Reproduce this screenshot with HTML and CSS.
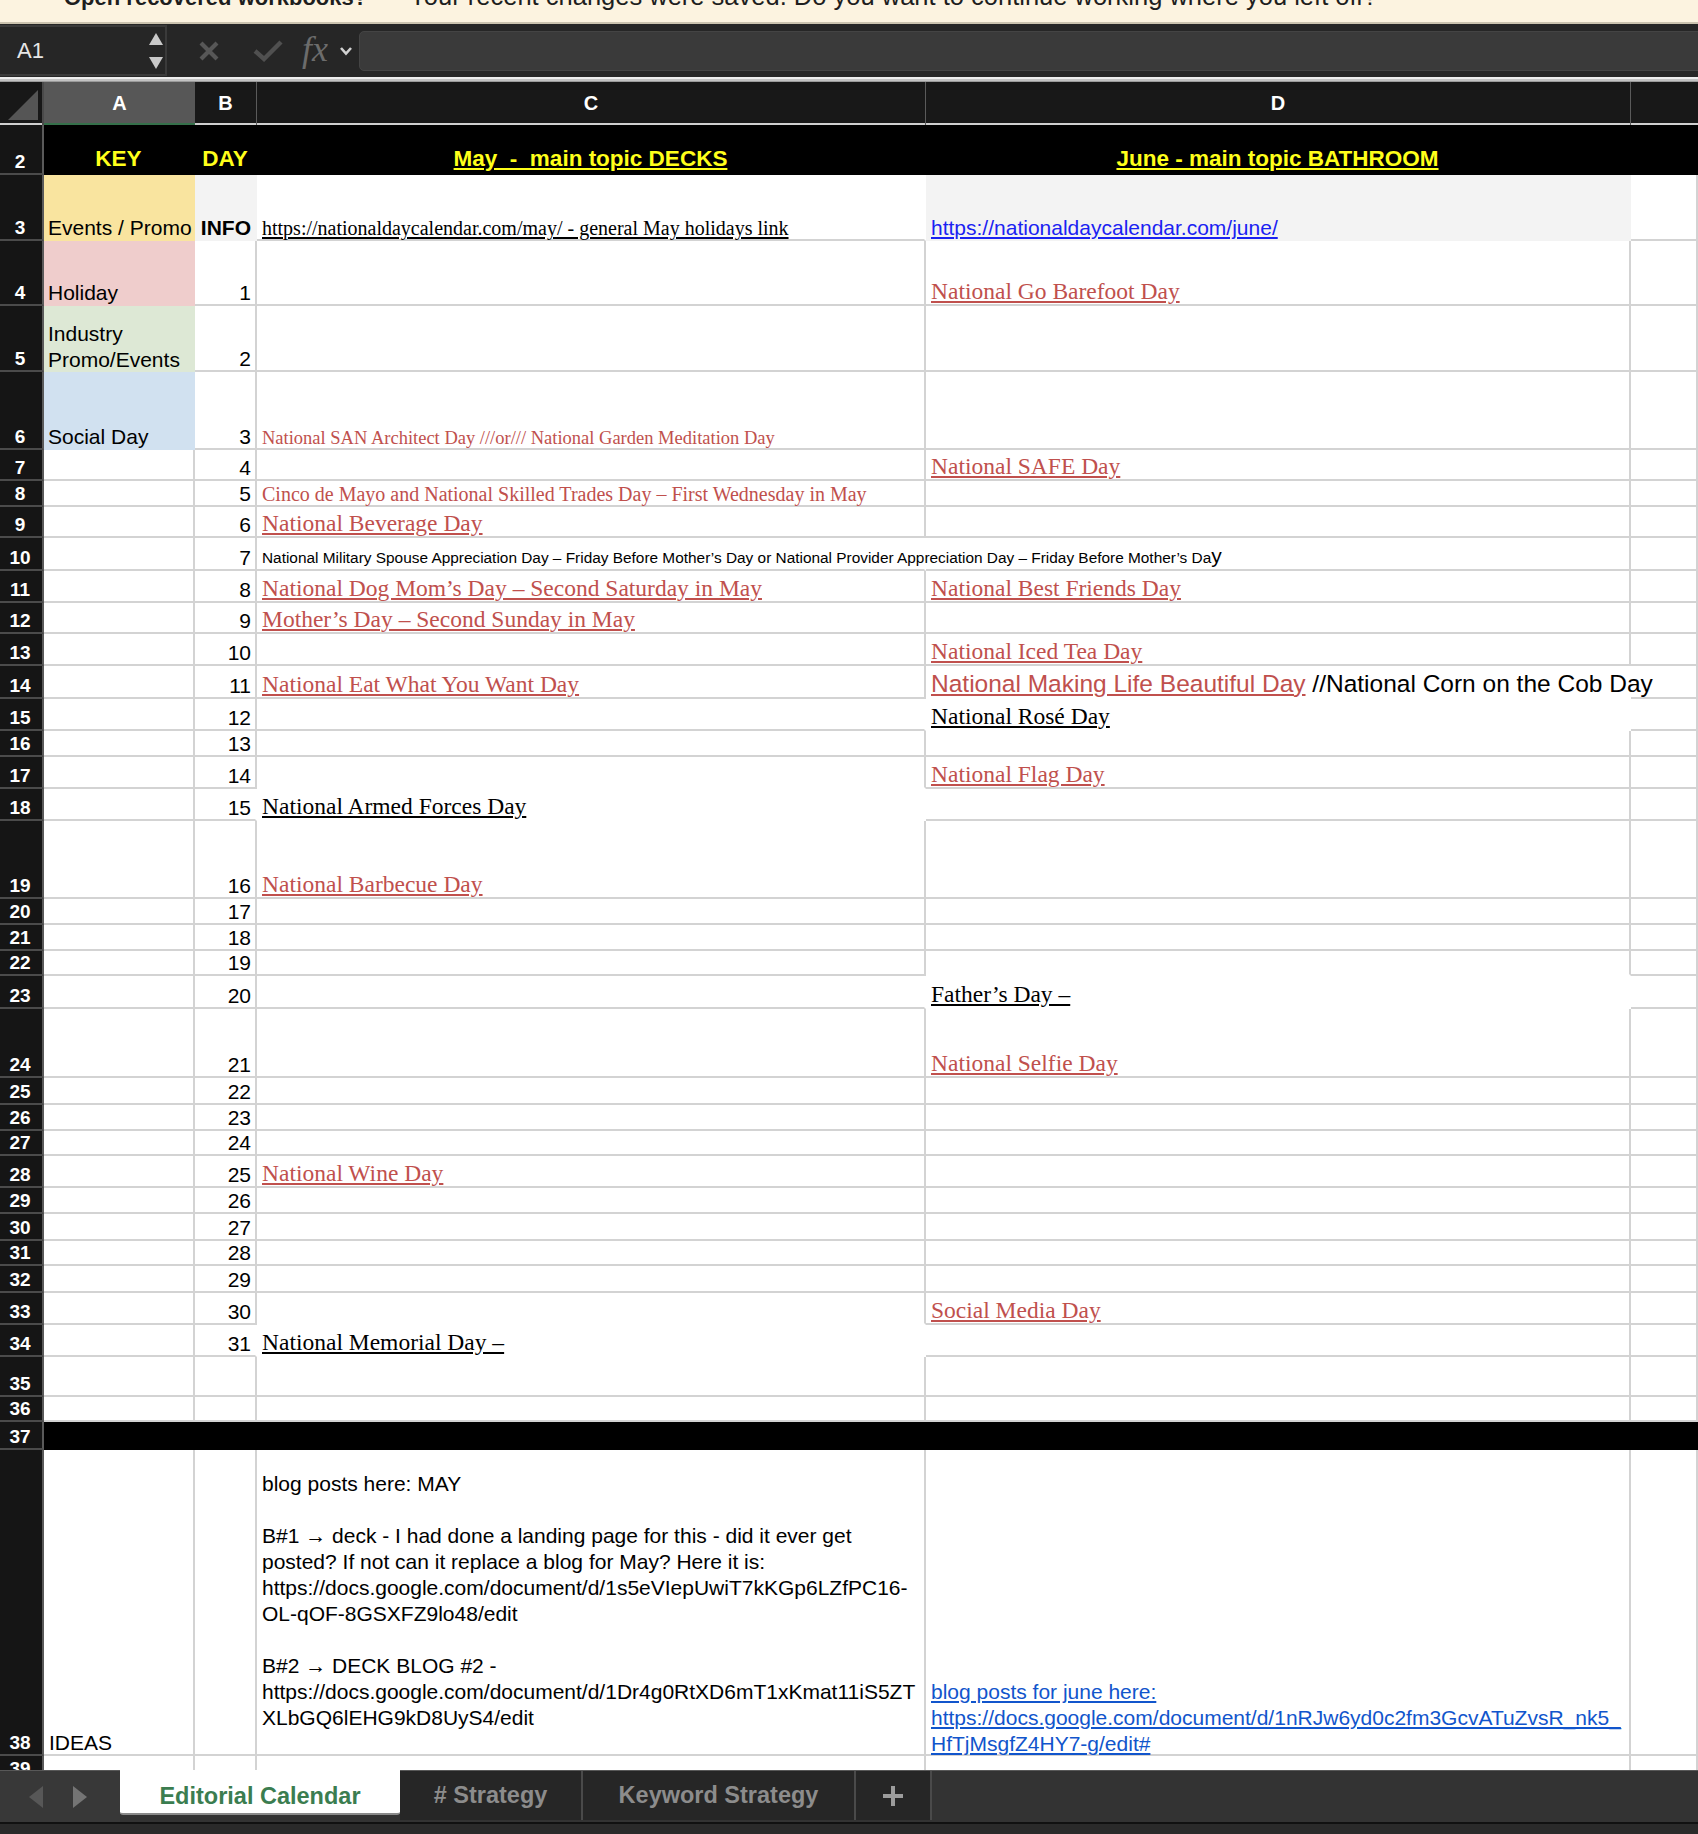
FILE: index.html
```html
<!DOCTYPE html>
<html>
<head>
<meta charset="utf-8">
<link rel="stylesheet" href="styles.css">
</head>
<body>
<div class="banner"><div class="banner-text"><span class="bt-title">Open recovered workbooks?</span><span class="bt-msg">Your recent changes were saved. Do you want to continue working where you left off?</span></div></div>

<div class="fbar">
  <div class="namebox">
    <span class="nb-text">A1</span>
    <span class="spin">
      <svg width="14" height="12" viewBox="0 0 14 12"><polygon points="7,0 14,12 0,12" fill="#c9c9c9"/></svg>
      <svg width="14" height="12" viewBox="0 0 14 12"><polygon points="0,0 14,0 7,12" fill="#c9c9c9"/></svg>
    </span>
  </div>
  <div class="ftools">
    <svg class="ic-x" width="22" height="22" viewBox="0 0 22 22"><path d="M3 3 L19 19 M19 3 L3 19" stroke="#575757" stroke-width="4.2" stroke-linecap="butt"/></svg>
    <svg class="ic-ok" width="30" height="22" viewBox="0 0 30 22"><path d="M2 11 L11 19 L28 2" stroke="#505050" stroke-width="4.4" fill="none"/></svg>
    <span class="fx">fx</span>
    <svg class="ic-chev" width="14" height="10" viewBox="0 0 14 10"><path d="M2 2 L7 7.5 L12 2" stroke="#d2d2d2" stroke-width="2.6" fill="none"/></svg>
  </div>
  <div class="finput"></div>
</div>
<div class="sep"></div>

<div class="sheet">
  <div class="row hdr">
    <div class="corner"><svg width="42" height="41" viewBox="0 0 42 41"><polygon points="38,8 38,38 8,38" fill="#555"/></svg></div>
    <div class="ch sel">A</div>
    <div class="ch">B</div>
    <div class="ch">C</div>
    <div class="ch">D</div>
    <div class="ch last"></div>
  </div>

  <div class="row h50">
    <div class="rh">2</div>
    <div class="c fk ctr"><span class="yh">KEY</span></div>
    <div class="c fk ctr"><span class="yh">DAY</span></div>
    <div class="c fk ctr"><span class="yh u">May  -  main topic DECKS</span></div>
    <div class="c fk ctr"><span class="yh u">June - main topic BATHROOM</span></div>
    <div class="c fk"></div>
  </div>

  <div class="row h66">
    <div class="rh">3</div>
    <div class="c fy">Events / Promo</div>
    <div class="c fg n"><b>INFO</b></div>
    <div class="c nr"><span class="lk3">https://nationaldaycalendar.com/may/ - general May holidays link</span></div>
    <div class="c fg"><span class="bl3">https://nationaldaycalendar.com/june/</span></div>
    <div class="c"></div>
  </div>

  <div class="row h65">
    <div class="rh">4</div>
    <div class="c fp">Holiday</div>
    <div class="c n">1</div>
    <div class="c"></div>
    <div class="c"><span class="rl">National Go Barefoot Day</span></div>
    <div class="c"></div>
  </div>

  <div class="row h66">
    <div class="rh">5</div>
    <div class="c fgr"><div class="two">Industry<br>Promo/Events</div></div>
    <div class="c n">2</div>
    <div class="c"></div>
    <div class="c"></div>
    <div class="c"></div>
  </div>

  <div class="row h78">
    <div class="rh">6</div>
    <div class="c fb">Social Day</div>
    <div class="c n">3</div>
    <div class="c"><span class="rs">National SAN Architect Day ///or/// National Garden Meditation Day</span></div>
    <div class="c"></div>
    <div class="c"></div>
  </div>

  <div class="row h31">
    <div class="rh">7</div>
    <div class="c"></div>
    <div class="c n">4</div>
    <div class="c"></div>
    <div class="c"><span class="rl">National SAFE Day</span></div>
    <div class="c"></div>
  </div>

  <div class="row h26">
    <div class="rh">8</div>
    <div class="c"></div>
    <div class="c n">5</div>
    <div class="c"><span class="rm">Cinco de Mayo and National Skilled Trades Day – First Wednesday in May</span></div>
    <div class="c"></div>
    <div class="c"></div>
  </div>

  <div class="row h31">
    <div class="rh">9</div>
    <div class="c"></div>
    <div class="c n">6</div>
    <div class="c"><span class="rl">National Beverage Day</span></div>
    <div class="c"></div>
    <div class="c"></div>
  </div>

  <div class="row h33">
    <div class="rh">10</div>
    <div class="c"></div>
    <div class="c n">7</div>
    <div class="c nr"><span class="mil">National Military Spouse Appreciation Day – Friday Before Mother’s Day or National Provider Appreciation Day – Friday Before Mother’s Da<span class="big">y</span></span></div>
    <div class="c"></div>
    <div class="c"></div>
  </div>

  <div class="row h32">
    <div class="rh">11</div>
    <div class="c"></div>
    <div class="c n">8</div>
    <div class="c"><span class="rl">National Dog Mom’s Day – Second Saturday in May</span></div>
    <div class="c"><span class="rl">National Best Friends Day</span></div>
    <div class="c"></div>
  </div>

  <div class="row h31">
    <div class="rh">12</div>
    <div class="c"></div>
    <div class="c n">9</div>
    <div class="c"><span class="rl">Mother’s Day – Second Sunday in May</span></div>
    <div class="c"></div>
    <div class="c"></div>
  </div>

  <div class="row h32">
    <div class="rh">13</div>
    <div class="c"></div>
    <div class="c n">10</div>
    <div class="c"></div>
    <div class="c"><span class="rl">National Iced Tea Day</span></div>
    <div class="c"></div>
  </div>

  <div class="row h33">
    <div class="rh">14</div>
    <div class="c"></div>
    <div class="c n">11</div>
    <div class="c"><span class="rl">National Eat What You Want Day</span></div>
    <div class="c nr wbm"><span class="ar">National Making Life Beautiful Day</span><span class="ark"> //National Corn on the Cob Day</span></div>
    <div class="c"></div>
  </div>

  <div class="row h32">
    <div class="rh">15</div>
    <div class="c"></div>
    <div class="c n">12</div>
    <div class="c wr"></div>
    <div class="c wr wbm"><span class="bk">National Rosé Day</span></div>
    <div class="c"></div>
  </div>

  <div class="row h26">
    <div class="rh">16</div>
    <div class="c"></div>
    <div class="c n">13</div>
    <div class="c"></div>
    <div class="c"></div>
    <div class="c"></div>
  </div>

  <div class="row h32">
    <div class="rh">17</div>
    <div class="c"></div>
    <div class="c n">14</div>
    <div class="c wbm"></div>
    <div class="c"><span class="rl">National Flag Day</span></div>
    <div class="c"></div>
  </div>

  <div class="row h32">
    <div class="rh">18</div>
    <div class="c"></div>
    <div class="c n wr">15</div>
    <div class="c wr wbm"><span class="bk">National Armed Forces Day</span></div>
    <div class="c"></div>
    <div class="c"></div>
  </div>

  <div class="row h78">
    <div class="rh">19</div>
    <div class="c"></div>
    <div class="c n">16</div>
    <div class="c"><span class="rl">National Barbecue Day</span></div>
    <div class="c"></div>
    <div class="c"></div>
  </div>

  <div class="row h26"><div class="rh">20</div><div class="c"></div><div class="c n">17</div><div class="c"></div><div class="c"></div><div class="c"></div></div>
  <div class="row h26"><div class="rh">21</div><div class="c"></div><div class="c n">18</div><div class="c"></div><div class="c"></div><div class="c"></div></div>
  <div class="row h25"><div class="rh">22</div><div class="c"></div><div class="c n">19</div><div class="c"></div><div class="c wbm"></div><div class="c"></div></div>

  <div class="row h33">
    <div class="rh">23</div>
    <div class="c"></div>
    <div class="c n">20</div>
    <div class="c wr"></div>
    <div class="c wr wbm"><span class="bk">Father’s Day –</span></div>
    <div class="c"></div>
  </div>

  <div class="row h69">
    <div class="rh">24</div>
    <div class="c"></div>
    <div class="c n">21</div>
    <div class="c"></div>
    <div class="c"><span class="rl">National Selfie Day</span></div>
    <div class="c"></div>
  </div>

  <div class="row h27"><div class="rh">25</div><div class="c"></div><div class="c n">22</div><div class="c"></div><div class="c"></div><div class="c"></div></div>
  <div class="row h26"><div class="rh">26</div><div class="c"></div><div class="c n">23</div><div class="c"></div><div class="c"></div><div class="c"></div></div>
  <div class="row h25"><div class="rh">27</div><div class="c"></div><div class="c n">24</div><div class="c"></div><div class="c"></div><div class="c"></div></div>

  <div class="row h32">
    <div class="rh">28</div>
    <div class="c"></div>
    <div class="c n">25</div>
    <div class="c"><span class="rl">National Wine Day</span></div>
    <div class="c"></div>
    <div class="c"></div>
  </div>

  <div class="row h26"><div class="rh">29</div><div class="c"></div><div class="c n">26</div><div class="c"></div><div class="c"></div><div class="c"></div></div>
  <div class="row h27"><div class="rh">30</div><div class="c"></div><div class="c n">27</div><div class="c"></div><div class="c"></div><div class="c"></div></div>
  <div class="row h25"><div class="rh">31</div><div class="c"></div><div class="c n">28</div><div class="c"></div><div class="c"></div><div class="c"></div></div>
  <div class="row h27"><div class="rh">32</div><div class="c"></div><div class="c n">29</div><div class="c"></div><div class="c"></div><div class="c"></div></div>

  <div class="row h32">
    <div class="rh">33</div>
    <div class="c"></div>
    <div class="c n">30</div>
    <div class="c wbm"></div>
    <div class="c"><span class="rl">Social Media Day</span></div>
    <div class="c"></div>
  </div>

  <div class="row h32">
    <div class="rh">34</div>
    <div class="c"></div>
    <div class="c n wr">31</div>
    <div class="c wr wbm"><span class="bk">National Memorial Day –</span></div>
    <div class="c"></div>
    <div class="c"></div>
  </div>

  <div class="row h40"><div class="rh">35</div><div class="c"></div><div class="c"></div><div class="c"></div><div class="c"></div><div class="c"></div></div>
  <div class="row h25"><div class="rh">36</div><div class="c"></div><div class="c"></div><div class="c"></div><div class="c"></div><div class="c"></div></div>
  <div class="row h28"><div class="rh">37</div><div class="c fk"></div><div class="c fk"></div><div class="c fk"></div><div class="c fk"></div><div class="c fk"></div></div>

  <div class="row h306">
    <div class="rh">38</div>
    <div class="c">IDEAS</div>
    <div class="c"></div>
    <div class="c"><div class="ml">blog posts here: MAY<br><br>B#1 → deck - I had done a landing page for this - did it ever get<br>posted? If not can it replace a blog for May? Here it is:<br>https://docs.google.com/document/d/1s5eVIepUwiT7kKGp6LZfPC16-<br>OL-qOF-8GSXFZ9lo48/edit<br><br>B#2 → DECK BLOG #2 -<br>https://docs.google.com/document/d/1Dr4g0RtXD6mT1xKmat11iS5ZT<br>XLbGQ6lEHG9kD8UyS4/edit<br><br></div></div>
    <div class="c"><div class="ml blue"><span class="u">blog posts for june here: </span><br><span class="u">https://docs.google.com/document/d/1nRJw6yd0c2fm3GcvATuZvsR_nk5_</span><br><span class="u">HfTjMsgfZ4HY7-g/edit#</span></div></div>
    <div class="c"></div>
  </div>

  <div class="row h26"><div class="rh">39</div><div class="c"></div><div class="c"></div><div class="c"></div><div class="c"></div><div class="c"></div></div>
</div>

<div class="tabs">
  <div class="nav">
    <svg width="14" height="22" viewBox="0 0 14 22"><polygon points="14,0 14,22 0,11" fill="#575757"/></svg>
    <svg width="14" height="22" viewBox="0 0 14 22"><polygon points="0,0 14,11 0,22" fill="#747474"/></svg>
  </div>
  <div class="tab active">Editorial Calendar</div>
  <div class="tab t2"># Strategy</div>
  <div class="tab t3">Keyword Strategy</div>
  <div class="tab add"><svg width="22" height="22" viewBox="0 0 22 22"><path d="M11 1 V21 M1 11 H21" stroke="#9c9c9c" stroke-width="4"/></svg></div>
  <div class="rest"></div>
</div>
<div class="tabfoot"></div>
</body>
</html>
```

FILE: styles.css
```css
* { box-sizing: border-box; }
html, body { margin: 0; padding: 0; }
body {
  width: 1698px;
  height: 1834px;
  overflow: hidden;
  background: #ffffff;
  font-family: "Liberation Sans", Arial, sans-serif;
}

/* banner */
.banner {
  height: 24px;
  background: #fcf3e0;
  border-bottom: 2px solid #cbc3af;
  overflow: hidden;
  padding-left: 64px;
}
.banner-text {
  display: flex;
  align-items: baseline;
  white-space: nowrap;
  color: #1e1e1e;
  line-height: 1;
  margin-top: -16px;
}
.bt-title {
  font-size: 22px;
  font-weight: bold;
  margin-right: 42px;
}
.bt-msg {
  font-size: 25.5px;
}

/* formula bar */
.fbar {
  height: 53px;
  background: #262626;
  display: flex;
  align-items: center;
}
.namebox {
  width: 167px;
  height: 51px;
  border: 2px solid #3a3a3a;
  border-left: none;
  display: flex;
  align-items: center;
  justify-content: space-between;
  padding: 0 2px 0 17px;
  color: #e6e6e6;
  font-size: 22px;
}
.spin {
  display: flex;
  flex-direction: column;
  gap: 12px;
}
.ftools {
  width: 192px;
  display: flex;
  align-items: center;
  padding-left: 31px;
}
.ic-x { margin-right: 33px; }
.ic-ok { margin-right: 19px; }
.fx {
  font-family: "Liberation Serif", "Times New Roman", serif;
  font-style: italic;
  font-size: 36px;
  color: #6c6c6c;
  margin-right: 11px;
  line-height: 1;
  margin-top: -4px;
}
.finput {
  flex: 1;
  height: 40px;
  background: #3a3a3a;
  border: 1px solid #444;
  border-radius: 5px;
  margin-right: -6px;
}
.sep {
  height: 5px;
  background: #c2c2c2;
  border-top: 2px solid #ededed;
  border-bottom: 1px solid #9a9a9a;
}

/* sheet */
.sheet {
  height: 1688px;
  overflow: hidden;
}
.row {
  display: grid;
  grid-template-columns: 44px 151px 62px 669px 705px 67px;
}
.hdr {
  height: 43px;
  background: #181818;
  border-bottom: 2px solid #cfcfcf;
}
.corner {
  border-right: 2px solid #4a4a4a;
}
.ch {
  display: flex;
  align-items: center;
  justify-content: center;
  color: #ffffff;
  font-size: 20px;
  font-weight: bold;
  border-right: 1px solid #5a5a5a;
  padding-bottom: 3px;
}
.ch.sel {
  background: #575757;
  border-right: none;
  box-shadow: inset 0 -4px 0 #35704a;
}
.ch.last { border-right: none; }

.h25 { height: 25px; }
.h26 { height: 26px; }
.h27 { height: 27px; }
.h28 { height: 28px; }
.h31 { height: 31px; }
.h32 { height: 32px; }
.h33 { height: 33px; }
.h40 { height: 40px; }
.h50 { height: 50px; }
.h65 { height: 65px; }
.h66 { height: 66px; }
.h69 { height: 69px; }
.h78 { height: 78px; }
.h306 { height: 306px; }

.rh {
  background: #151515;
  color: #ffffff;
  font-size: 19px;
  font-weight: bold;
  line-height: 1;
  display: flex;
  align-items: flex-end;
  justify-content: center;
  padding: 0 2px 2px 0;
  border-right: 2px solid #5a5a5a;
  border-bottom: 2px solid #4b4b4b;
}

.c {
  display: flex;
  align-items: flex-end;
  padding: 0 5px 1px 5px;
  border-right: 2px solid #d3d3d3;
  border-bottom: 2px solid #d3d3d3;
  font-size: 21px;
  line-height: 1;
  color: #000;
  white-space: nowrap;
  min-width: 0;
}
.c.n { justify-content: flex-end; padding-right: 4px; }
.c.ctr { justify-content: center; }
.c.nr { border-right-color: transparent; }
.c.wr { border-right-color: #ffffff; }
.c.wbm { border-bottom-color: #ffffff; }

/* fills hide the grid */
.fk { background: #000000; border-color: transparent; }
.fy { background: #f9e49f; border-color: transparent; }
.fp { background: #efcdcc; border-color: transparent; }
.fgr { background: #dde8d5; border-color: transparent; }
.fb { background: #d1e1f0; border-color: transparent; }
.fg { background: #f3f3f3; border-color: transparent; }

.fy, .fp, .fgr, .fb { padding-left: 4px; }

.yh {
  color: #ffff1a;
  font-weight: bold;
  font-size: 22.5px;
  white-space: pre;
  padding-bottom: 2px;
}
.u {
  text-decoration: underline;
  text-decoration-thickness: 2px;
  text-underline-offset: 2px;
}

.two { line-height: 26px; margin-bottom: -4px; }

.lk3 {
  font-family: "Liberation Serif", "Times New Roman", serif;
  font-size: 20px;
  text-decoration: underline;
  text-decoration-thickness: 1.5px;
  text-underline-offset: 2px;
}
.bl3 {
  font-size: 21px;
  color: #1a22f2;
  text-decoration: underline;
  text-decoration-thickness: 2px;
  text-underline-offset: 2px;
}
.rl, .bk {
  font-family: "Liberation Serif", "Times New Roman", serif;
  font-size: 23.5px;
  color: #c0504d;
  text-decoration: underline;
  text-decoration-thickness: 2px;
  text-underline-offset: 2px;
}
.bk { color: #000; }
.rs {
  font-family: "Liberation Serif", "Times New Roman", serif;
  font-size: 18.5px;
  color: #c0504d;
}
.rm {
  font-family: "Liberation Serif", "Times New Roman", serif;
  font-size: 20px;
  color: #c0504d;
}
.mil {
  font-size: 15.4px;
  padding-bottom: 2px;
}
.mil .big { font-size: 21px; }
.ar {
  font-size: 24.5px;
  color: #c0504d;
  text-decoration: underline;
  text-decoration-thickness: 2px;
  text-underline-offset: 2px;
}
.ark { font-size: 24.5px; color: #000; white-space: pre; }

.ml {
  font-size: 21px;
  line-height: 26px;
  margin-bottom: -4px;
}
.ml.blue { color: #1155cc; }
.ml.blue .u { text-decoration-thickness: 1.5px; }

/* tabs */
.tabs {
  height: 52px;
  display: flex;
  background: #333333;
  border-top: 1px solid #585858;
}
.nav {
  width: 120px;
  display: flex;
  align-items: center;
  padding-left: 29px;
  gap: 30px;
  background: #383838;
}
.tab {
  display: flex;
  align-items: center;
  justify-content: center;
  font-size: 23.5px;
  font-weight: bold;
  color: #8c8c8c;
  background: #262626;
  border-right: 2px solid #4a4a4a;
  margin-bottom: 2px;
}
.tab.active {
  width: 280px;
  background: #ffffff;
  color: #3b7d50;
  border-right: none;
  border-bottom: 2px solid #8a8a8a;
  margin-top: -1px;
  margin-bottom: 7px;
  padding-top: 9px;
  border-radius: 0 0 3px 3px;
}
.tab.t2 { width: 183px; }
.tab.t3 { width: 273px; }
.tab.add { width: 76px; }
.rest { flex: 1; }
.tabfoot {
  height: 12px;
  background: #2a2a2a;
  border-top: 2px solid #111111;
}
```
